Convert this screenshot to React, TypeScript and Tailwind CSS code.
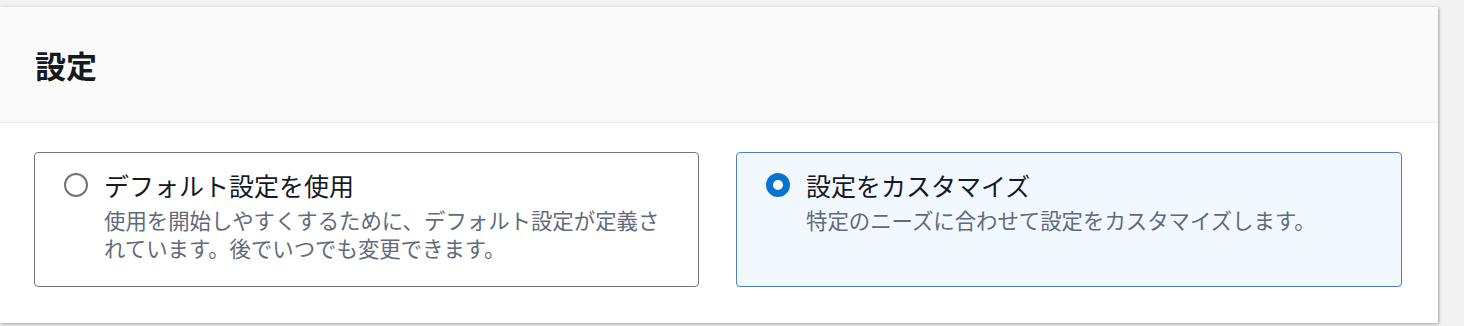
import React, { useState } from "react";

const font = { fontFamily: '"Noto Sans CJK JP", "Noto Sans", sans-serif' };

const options = [
  {
    value: "default",
    title: "デフォルト設定を使用",
    desc: "使用を開始しやすくするために、デフォルト設定が定義されています。後でいつでも変更できます。",
  },
  {
    value: "custom",
    title: "設定をカスタマイズ",
    desc: "特定のニーズに合わせて設定をカスタマイズします。",
  },
];

const App = () => {
  const [selected, setSelected] = useState("custom");

  return (
    <div className="min-h-screen bg-[#f2f2f2] pt-[7px]" style={font}>
      <div className="w-[1438px] h-[316px] bg-white shadow-[1px_1px_3px_rgba(0,0,0,0.35)] flex flex-col">
        <div className="h-[116px] bg-[#fafafa] border-b border-[#e9ebed] flex items-center pl-[35px]">
          <h2 className="text-[31px] font-bold text-[#16191f] leading-none">設定</h2>
        </div>
        <div className="grid grid-cols-[665px_666px] gap-[37px] pl-[34px] pt-[29px]">
          {options.map((opt) => {
            const active = selected === opt.value;
            return (
              <label
                key={opt.value}
                onClick={() => setSelected(opt.value)}
                className={`h-[135px] rounded-[4px] border pl-[29px] pr-[30px] pt-[16px] flex gap-[16px] cursor-pointer ${
                  active ? "border-[#4f7fc4] bg-[#f1f8ff]" : "border-[#747678] bg-white"
                }`}
              >
                <span className="h-[32px] flex items-center shrink-0">
                  {active ? (
                    <span className="w-[24px] h-[24px] rounded-full border-[7px] border-[#0972d3] bg-white" />
                  ) : (
                    <span className="w-[24px] h-[24px] rounded-full border-[2.5px] border-[#6f737a] bg-white" />
                  )}
                </span>
                <span className="flex flex-col">
                  <span className="text-[25px] leading-[32px] text-[#16191f]">{opt.title}</span>
                  <span className="mt-[5px] text-[21.4px] leading-[28px] text-[#5f6b7a]">{opt.desc}</span>
                </span>
              </label>
            );
          })}
        </div>
      </div>
    </div>
  );
};

export default App;
